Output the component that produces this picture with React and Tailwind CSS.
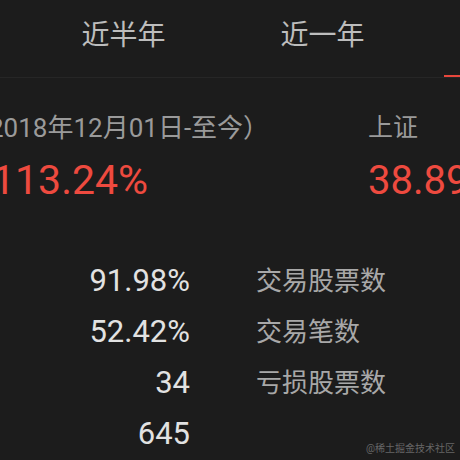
import React from "react";

const TABS = ["近半年", "近一年", "近三年"];

const STATS = [
  { value: "91.98%", label: "交易股票数" },
  { value: "52.42%", label: "交易笔数" },
  { value: "34", label: "亏损股票数" },
  { value: "645", label: "" },
];

const App = () => {
  return (
    <div
      className="w-[460px] h-[460px] overflow-hidden bg-[#1c1c1c] relative"
      style={{ fontFamily: "Roboto, 'Noto Sans CJK SC', sans-serif" }}
    >
      {/* Tabs */}
      <div className="h-[78px] border-b border-[#262626] flex pl-[24px] overflow-hidden">
        {TABS.map((tab, index) => (
          <div key={index} className="w-[199px] shrink-0 relative flex justify-center pt-[18px]">
            <span className="text-[28px] leading-[36px] text-[#bdbdbd]">{tab}</span>
            {index === 2 && (
              <div className="absolute left-[22px] bottom-[-1px] w-[60px] h-[3px] bg-[#e8473c]"></div>
            )}
          </div>
        ))}
      </div>

      {/* Summary */}
      <div className="flex pt-[35px]">
        <div className="w-[376px] shrink-0 ml-[-8px]">
          <div className="ml-[-29px] text-[26px] leading-[30px] text-[#9a9a9a] whitespace-nowrap">
            （2018年12月01日-至今）
          </div>
          <div className="mt-[14px] text-[41px] leading-[47px] text-[#ee4a3f]">113.24%</div>
        </div>
        <div className="shrink-0">
          <div className="text-[25px] leading-[30px] text-[#9a9a9a] whitespace-nowrap">上证</div>
          <div className="mt-[14px] text-[40px] leading-[47px] text-[#ee4a3f] whitespace-nowrap">38.89%</div>
        </div>
      </div>

      {/* Stats */}
      <div className="mt-[58px] flex flex-col gap-[13px]">
        {STATS.map((stat, index) => (
          <div key={index} className="flex items-center h-[38px]">
            <div className="w-[190px] text-right text-[31px] text-[#e2e2e2]">{stat.value}</div>
            <div className="ml-[66px] text-[26px] text-[#a8a8a8]">{stat.label}</div>
          </div>
        ))}
      </div>

      <div className="absolute right-[5px] bottom-[5px] text-[10px] leading-[12px] text-[#666666]">@稀土掘金技术社区</div>
    </div>
  );
};

export default App;
